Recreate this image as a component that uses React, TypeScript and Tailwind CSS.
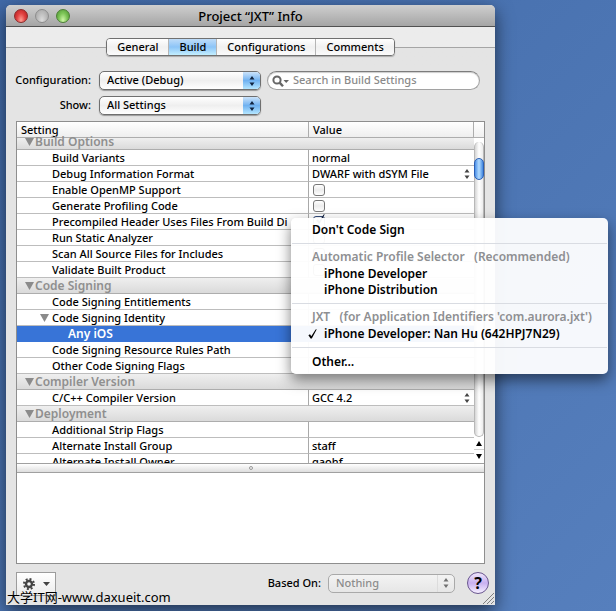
import type { ReactNode } from 'react';
import clsx from 'clsx';

type Row = {
    name: string;
    kind?: 'group' | 'parent' | 'child';
    value?: string;
    control?: 'popup' | 'check';
    checked?: boolean;
};

const rows: Row[] = [
    { name: 'Build Options', kind: 'group' },
    { name: 'Build Variants', value: 'normal' },
    { name: 'Debug Information Format', value: 'DWARF with dSYM File', control: 'popup' },
    { name: 'Enable OpenMP Support', control: 'check' },
    { name: 'Generate Profiling Code', control: 'check' },
    { name: 'Precompiled Header Uses Files From Build Di', control: 'check', checked: true },
    { name: 'Run Static Analyzer', control: 'check' },
    { name: 'Scan All Source Files for Includes', control: 'check' },
    { name: 'Validate Built Product', control: 'check' },
    { name: 'Code Signing', kind: 'group' },
    { name: 'Code Signing Entitlements' },
    { name: 'Code Signing Identity', kind: 'parent' },
    { name: 'Any iOS', kind: 'child' },
    { name: 'Code Signing Resource Rules Path' },
    { name: 'Other Code Signing Flags' },
    { name: 'Compiler Version', kind: 'group' },
    { name: 'C/C++ Compiler Version', value: 'GCC 4.2', control: 'popup' },
    { name: 'Deployment', kind: 'group' },
    { name: 'Additional Strip Flags' },
    { name: 'Alternate Install Group', value: 'staff' },
    { name: 'Alternate Install Owner', value: 'gaohf' },
];

function Arrows({ className }: { className?: string }) {
    return (
        <svg viewBox="0 0 6 10" className={clsx('w-1.5 h-2.5', className)} fill="currentColor" aria-hidden="true">
            <path d="M3 0L5.5 3.6H0.5z M3 10L5.5 6.4H0.5z" />
        </svg>
    );
}

function Disclosure() {
    return (
        <svg viewBox="0 0 9 8" className="w-[9px] h-2 shrink-0 text-[#8b8b8b]" fill="currentColor" aria-hidden="true">
            <path d="M0 0H9L4.5 8z" />
        </svg>
    );
}

function Check({ className }: { className?: string }) {
    return (
        <svg viewBox="0 0 9 10" className={clsx('w-[9px] h-2.5', className)} fill="currentColor" aria-hidden="true">
            <path d="M0.4 6.2L2 5.2L3.3 7.2L7.6 0.4L8.8 0.2L3.8 9.6H2.6z" />
        </svg>
    );
}

function PopUp({ id, value, disabled }: { id: string; value: string; disabled?: boolean }) {
    return (
        <div
            className={clsx(
                'flex h-[19px] rounded-[5px] border overflow-hidden relative',
                disabled
                    ? 'border-[#a9a9a9] w-[127px] bg-linear-to-b from-[#f3f3f3] to-[#e6e6e6]'
                    : 'border-[#6f6f6f] w-[162px] bg-linear-to-b from-white via-[#efefef] to-white shadow-[0_1px_1px_#9a9a9a]'
            )}
        >
            <select
                id={id}
                disabled={disabled}
                className={clsx('appearance-none w-full bg-transparent px-[7px] pb-0.5 leading-4 outline-none', disabled ? 'text-[#8c8c8c]' : 'text-black')}
            >
                <option>{value}</option>
            </select>
            <span
                className={clsx(
                    'absolute right-0 inset-y-0 w-[17px] flex items-center justify-center pointer-events-none',
                    disabled ? 'text-[#707070] border-l border-[#dcdcdc]' : 'text-[#10233f] bg-linear-to-b from-[#cbe3fa] via-[#6fb1f0] to-[#b4e6ff]'
                )}
            >
                <Arrows />
            </span>
        </div>
    );
}

function Tab({ active, children }: { active?: boolean; children: ReactNode }) {
    return (
        <button
            className={clsx(
                'h-full px-2.5 border-r border-[#b5b5b5] last:border-r-0',
                active
                    ? 'bg-linear-to-b from-[#bfdcf8] via-[#8cc4f7] to-[#c3efff]'
                    : 'bg-linear-to-b from-white via-[#f0f0f0] to-[#fbfbfb]'
            )}
        >
            {children}
        </button>
    );
}

function SettingRow({ row, first }: { row: Row; first: boolean }) {
    if (row.kind === 'group') {
        return (
            <tr className="bg-linear-to-b from-[#efefef] to-[#d9d9d9]">
                <td colSpan={2} className="p-0 border-b border-[#adadad]">
                    <div className={clsx('flex gap-px pl-2 text-xs font-semibold text-[#8f8f8f]', first ? 'items-start h-[11px] leading-2' : 'items-center h-[15px] leading-[15px]')}>
                        <Disclosure />
                        {row.name}
                    </div>
                </td>
            </tr>
        );
    }
    const selected = row.kind === 'child';
    return (
        <tr className={selected ? 'bg-[#3874d7] text-white text-xs leading-[15px] font-semibold' : 'bg-white'}>
            <td className={clsx('p-0 border-b', selected ? 'border-[#3874d7]' : 'border-[#bdbdbd] border-r border-r-[#a9a9a9]')}>
                <div className={clsx('flex items-center gap-[3px] h-[15px] whitespace-nowrap', selected ? 'pl-[51px]' : row.kind === 'parent' ? 'pl-[23px]' : 'pl-[35px]')}>
                    {row.kind === 'parent' && <Disclosure />}
                    {row.name}
                </div>
            </td>
            <td className={clsx('p-0 border-b', selected ? 'border-[#3874d7]' : 'border-[#bdbdbd]')}>
                <div className="relative flex items-center h-[15px] pl-[3px]">
                    {row.control === 'check' && (
                        <input
                            type="checkbox"
                            aria-label={row.name}
                            defaultChecked={row.checked}
                            className="appearance-none size-3 ml-px rounded-[3px] border border-[#777] bg-linear-to-b from-white via-[#ececec] to-white checked:border-[#334b7c]"
                        />
                    )}
                    {row.checked && <Check className="absolute left-[7px] top-0 text-[#14203a] pointer-events-none" />}
                    {row.control === 'popup' && (
                        <>
                            <select aria-label={row.name} className="appearance-none w-full bg-transparent outline-none">
                                <option>{row.value}</option>
                            </select>
                            <Arrows className="absolute right-1 text-[#444] pointer-events-none" />
                        </>
                    )}
                    {!row.control && row.value}
                </div>
            </td>
        </tr>
    );
}

function Scrollbar() {
    return (
        <div className="w-2.5 shrink-0 self-stretch flex flex-col bg-white" aria-hidden="true">
            <div className="h-4 border-b border-[#b0b0b0] bg-linear-to-b from-white to-[#f0f0f0]" />
            <div className="flex-1 mt-1 rounded-full border-x border-b border-[#b8b8b8] bg-linear-to-r from-[#d5d5d5] via-white to-[#ececec]">
                <div className="h-[22px] mt-4 -mx-px rounded-[5px] border border-[#2b5fb5] bg-linear-to-r from-[#4b8fe6] via-[#b3dcff] to-[#3f86df]" />
            </div>
            <div className="h-[13px] flex items-center justify-center border-b border-[#cfcfcf]">
                <svg viewBox="0 0 6 5" className="w-1.5 h-[5px]"><path d="M3 0L6 5H0z" /></svg>
            </div>
            <div className="h-[13px] flex items-center justify-center">
                <svg viewBox="0 0 6 5" className="w-1.5 h-[5px]"><path d="M3 5L6 0H0z" /></svg>
            </div>
        </div>
    );
}

function SigningMenu() {
    return (
        <div
            role="menu"
            className="absolute left-[291px] top-[218px] w-[317px] py-1 rounded-[5px] bg-white/95 shadow-[0_6px_14px_rgba(0,0,0,0.5)] flex flex-col text-xs leading-4 font-semibold"
        >
            <button role="menuitem" className="text-left pl-[21px]">Don't Code Sign</button>
            <hr className="my-[5px] mx-px border-[#d9dce2]" />
            <div className="pl-[21px] mb-px text-[#8e8f92] whitespace-pre">Automatic Profile Selector   (Recommended)</div>
            <button role="menuitem" className="text-left pl-[33px]">iPhone Developer</button>
            <button role="menuitem" className="text-left pl-[33px]">iPhone Distribution</button>
            <hr className="my-[5px] mx-px border-[#d9dce2]" />
            <div className="pl-[21px] mb-px text-[#8e8f92] whitespace-pre">JXT   (for Application Identifiers 'com.aurora.jxt')</div>
            <button role="menuitem" className="text-left pl-[17px] flex items-center gap-[7px]">
                <Check />
                iPhone Developer: Nan Hu (642HPJ7N29)
            </button>
            <hr className="mt-[5px] mb-1.5 mx-px border-[#d9dce2]" />
            <button role="menuitem" className="text-left pl-[21px]">Other…</button>
        </div>
    );
}

export default function App() {
    return (
        <main className="relative min-h-screen flex flex-col pl-1.5 pr-[121px] pt-[5px] pb-1.5 bg-linear-to-br from-[#416aa8] to-[#567fbd] font-['Noto_Sans','Noto_Sans_CJK_SC',sans-serif] text-[11px] font-medium text-black">
            <section className="flex-1 flex flex-col rounded-t-[5px] bg-[#e4e4e4] shadow-[0_6px_18px_rgba(0,0,0,0.6)]">
                <header className="relative h-[22px] shrink-0 flex items-center justify-center rounded-t-[5px] border-b border-[#515151] bg-linear-to-b from-[#cfcfcf] to-[#a5a5a5]">
                    <div className="absolute left-2 flex gap-[7px]">
                        <button aria-label="Close" className="size-3.5 rounded-full border border-[#8b2a2a] bg-radial-[at_50%_85%] from-[#ff9f94] via-[#e0403f] to-[#b01e1e]" />
                        <button aria-label="Minimize" className="size-3.5 rounded-full border border-[#8d8d8d] bg-radial-[at_50%_85%] from-[#dcdcdc] via-[#bdbdbd] to-[#a2a2a2]" />
                        <button aria-label="Zoom" className="size-3.5 rounded-full border border-[#4c7f35] bg-radial-[at_50%_85%] from-[#d0f7a8] via-[#7cc456] to-[#4b9030]" />
                    </div>
                    <h1 className="text-[13px] leading-4">Project “JXT” Info</h1>
                </header>

                <nav className="h-10 shrink-0 flex items-center bg-linear-to-b from-[#ececec] from-50% to-[#e4e4e4] to-50%">
                    <span className="flex-1 h-px bg-[#a5a5a5]" />
                    <div className="flex h-[18px] rounded-[4px] border border-[#707070] overflow-hidden leading-4 shadow-[0_1px_1px_#aaa]">
                        <Tab>General</Tab>
                        <Tab active>Build</Tab>
                        <Tab>Configurations</Tab>
                        <Tab>Comments</Tab>
                    </div>
                    <span className="flex-1 h-px bg-[#a5a5a5]" />
                </nav>

                <div className="grid grid-cols-[87px_162px_1fr] items-center gap-1.5 pr-[15px] mt-1">
                    <label htmlFor="configuration" className="text-right pr-0.5 whitespace-nowrap">Configuration:</label>
                    <PopUp id="configuration" value="Active (Debug)" />
                    <div className="flex items-center gap-1 h-[19px] px-1 rounded-full border border-[#a2a2a2] border-t-[#7c7c7c] bg-white shadow-[inset_0_1px_1px_#ccc]">
                        <svg viewBox="0 0 17 12" className="w-[17px] h-3 shrink-0 text-[#666]" fill="none" stroke="currentColor" aria-hidden="true">
                            <circle cx="5" cy="5" r="3.6" strokeWidth="2" />
                            <path d="M7.6 7.6L11 11.2" strokeWidth="2.4" />
                            <path d="M11.5 5H17L14.2 8z" fill="currentColor" stroke="none" />
                        </svg>
                        <input type="search" aria-label="Search" placeholder="Search in Build Settings" className="w-full bg-transparent outline-none placeholder:text-[#8a8a8a]" />
                    </div>
                    <label htmlFor="show" className="text-right pr-0.5">Show:</label>
                    <PopUp id="show" value="All Settings" />
                </div>

                <div className="flex-1 flex flex-col mx-2.5 mt-1.5 border border-[#8e8e8e] bg-white">
                    <div className="h-[341px] flex items-start overflow-hidden">
                        <table className="flex-1 w-full table-fixed border-separate border-spacing-0 leading-[15px]">
                            <colgroup>
                                <col className="w-[292px]" />
                                <col />
                            </colgroup>
                            <thead>
                                <tr className="bg-linear-to-b from-white to-[#ededed] text-left">
                                    <th className="p-0 pl-1 h-4 border-b border-r border-[#adadad] font-medium">Setting</th>
                                    <th className="p-0 pl-1 h-4 border-b border-r border-[#adadad] font-medium">Value</th>
                                </tr>
                            </thead>
                            <tbody>
                                {rows.map((row, i) => (
                                    <SettingRow key={row.name} row={row} first={i === 0} />
                                ))}
                            </tbody>
                        </table>
                        <Scrollbar />
                    </div>
                    <div className="h-[10px] shrink-0 flex items-center justify-center border-y border-[#a0a0a0] bg-linear-to-b from-white to-[#dedede]">
                        <span className="size-1 rounded-full border border-[#999]" />
                    </div>
                </div>

                <footer className="h-[41px] shrink-0 flex items-start pl-2.5 pr-1.5 pt-2">
                    <button aria-label="Actions" className="w-10 h-6 flex items-center justify-center gap-2 border border-[#9c9c9c] bg-linear-to-b from-white to-[#ececec] text-[#444]">
                        <svg viewBox="0 0 12 12" className="size-3" fill="none" stroke="currentColor" aria-hidden="true">
                            <circle cx="6" cy="6" r="3" strokeWidth="2.4" />
                            <circle cx="6" cy="6" r="5" strokeWidth="2" strokeDasharray="1.96 1.96" />
                        </svg>
                        <svg viewBox="0 0 7 4" className="w-[7px] h-1" fill="currentColor" aria-hidden="true"><path d="M0 0H7L3.5 4z" /></svg>
                    </button>
                    <div className="ml-auto flex items-center">
                        <label htmlFor="based-on" className="mr-[7px]">Based On:</label>
                        <PopUp id="based-on" value="Nothing" disabled />
                        <button aria-label="Help" className="ml-3 size-[22px] rounded-full border border-[#69568f] bg-linear-to-b from-[#efe6fb] via-[#c9b0f0] to-[#f6efff] text-base leading-5 font-bold">?</button>
                    </div>
                </footer>
            </section>

            <svg viewBox="0 0 12 12" className="absolute right-[122px] bottom-[7px] size-3" stroke="#808080" aria-hidden="true">
                <path d="M1 12L12 1M5 12L12 5M9 12L12 9" />
            </svg>

            <SigningMenu />

            <p className="absolute left-[7px] bottom-1.5 text-[13px] leading-4 font-normal">大学IT网-www.daxueit.com</p>
        </main>
    );
}
